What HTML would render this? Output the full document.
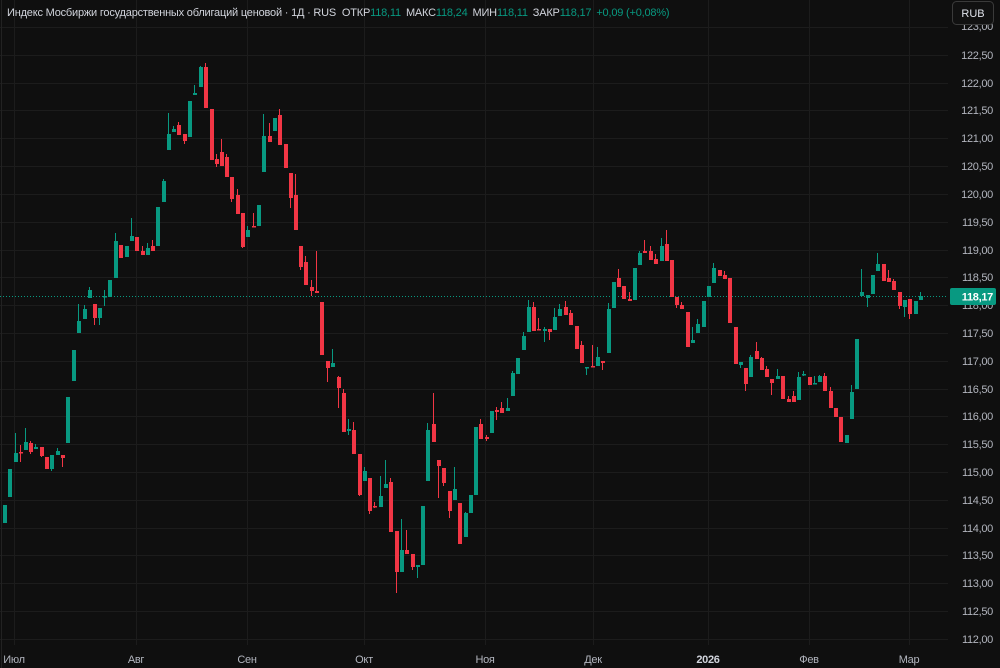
<!DOCTYPE html>
<html><head><meta charset="utf-8"><style>
html,body{margin:0;padding:0;background:#0f0f0f;width:1000px;height:668px;overflow:hidden}
svg{display:block}
text{font-family:"Liberation Sans",sans-serif}
</style></head><body>
<svg width="1000" height="668" viewBox="0 0 1000 668" xmlns="http://www.w3.org/2000/svg">
<rect width="1000" height="668" fill="#0f0f0f"/>
<g stroke="#1c1c1c" stroke-width="1">
<path d="M0 27.5H948M0 55.5H948M0 83.5H948M0 110.5H948M0 138.5H948M0 166.5H948M0 194.5H948M0 222.5H948M0 250.5H948M0 277.5H948M0 305.5H948M0 333.5H948M0 361.5H948M0 389.5H948M0 416.5H948M0 444.5H948M0 472.5H948M0 500.5H948M0 528.5H948M0 555.5H948M0 583.5H948M0 611.5H948M0 639.5H948"/>
<path d="M14.5 0V645M136.5 0V645M247.5 0V645M364.5 0V645M485.5 0V645M593.5 0V645M708.5 0V645M809.5 0V645M909.5 0V645"/>
</g>
<path d="M1.5 0V668" stroke="#222" />
<path d="M0 296.5H948" stroke="#089981" stroke-dasharray="1 2" stroke-width="1"/>
<path fill="none" stroke="#089981" stroke-width="1" d="M4.5 505V523M9.5 469V497M15.5 433V462M25.5 428V450M35.5 444V449M51.5 455V471M57.5 448V455M67.5 397V443M73.5 350V381M78.5 304V333M84.5 305V319M89.5 287V298M99.5 308V325M104.5 290V306M109.5 280V297M115.5 233V278M126.5 246V257M131.5 218V241M147.5 243V255M157.5 207V246M163.5 179V202M168.5 113V150M173.5 126V132M189.5 101V137M194.5 85V95M200.5 66V87M247.5 226V237M258.5 205V226M263.5 114V172M274.5 118V131M332.5 349V367M348.5 419V435M364.5 467V481M380.5 476V507M385.5 460V488M401.5 519V572M417.5 565V578M422.5 506V565M427.5 423V481M454.5 467V500M465.5 512V537M470.5 495V513M475.5 427V495M491.5 411V433M507.5 398V411M512.5 371V396M517.5 358V374M523.5 332V350M528.5 300V332M544.5 327V342M554.5 308V330M559.5 304V316M586.5 367V375M597.5 347V366M608.5 303V353M613.5 282V308M634.5 268V300M639.5 251V265M661.5 238V261M692.5 327V343M697.5 319V333M703.5 301V327M708.5 286V297M713.5 263V283M740.5 362V368M750.5 355V377M777.5 369V379M798.5 372V400M803.5 371V376M814.5 376V384M819.5 375V382M846.5 435V443M851.5 385V419M856.5 339V389M861.5 269V296M867.5 295V307M872.5 275V294M877.5 253V271M904.5 300V317M915.5 301V314M920.5 292V300"/>
<path fill="#089981" d="M3 505h4v18h-4zM8 469h4v28h-4zM14 453h4v9h-4zM24 442h4v8h-4zM34 447h4v2h-4zM50 455h4v14h-4zM56 451h4v4h-4zM66 397h4v46h-4zM72 350h4v31h-4zM77 321h4v12h-4zM83 309h4v10h-4zM88 290h4v8h-4zM98 308h4v10h-4zM103 296h4v1.5h-4zM108 280h4v17h-4zM114 241h4v37h-4zM125 246h4v11h-4zM130 236h4v5h-4zM146 248h4v7h-4zM156 207h4v39h-4zM162 181h4v21h-4zM167 134h4v16h-4zM172 129h4v3h-4zM188 101h4v36h-4zM193 93h4v2h-4zM199 67h4v20h-4zM246 230h4v7h-4zM257 205h4v21h-4zM262 136h4v36h-4zM273 118h4v13h-4zM331 363h4v4h-4zM347 429h4v2h-4zM363 471h4v10h-4zM379 496h4v11h-4zM384 484h4v4h-4zM400 550h4v22h-4zM416 565h4v2h-4zM421 506h4v59h-4zM426 430h4v51h-4zM453 489h4v11h-4zM464 513h4v24h-4zM469 495h4v18h-4zM474 427h4v68h-4zM490 411h4v22h-4zM506 408h4v3h-4zM511 373h4v23h-4zM516 358h4v16h-4zM522 336h4v14h-4zM527 307h4v25h-4zM543 329h4v2h-4zM553 317h4v13h-4zM558 309h4v7h-4zM585 367h4v1.5h-4zM596 357h4v9h-4zM607 309h4v44h-4zM612 282h4v26h-4zM633 268h4v32h-4zM638 253h4v12h-4zM660 246h4v15h-4zM691 340h4v3h-4zM696 324h4v9h-4zM702 301h4v26h-4zM707 286h4v11h-4zM712 268h4v15h-4zM739 362h4v3h-4zM749 357h4v20h-4zM776 376h4v3h-4zM797 377h4v23h-4zM802 374h4v1.5h-4zM813 383h4v1.5h-4zM818 376h4v6h-4zM845 435h4v8h-4zM850 392h4v27h-4zM855 339h4v50h-4zM860 292h4v4h-4zM866 295h4v3h-4zM871 275h4v19h-4zM876 264h4v7h-4zM903 300h4v7h-4zM914 301h4v13h-4zM919 296h4v4h-4z"/>
<path fill="none" stroke="#f23645" stroke-width="1" d="M20.5 445V462M30.5 441V454M41.5 447V457M46.5 457V469M62.5 455V467M94.5 304V325M120.5 245V258M136.5 237V251M142.5 246V255M152.5 240V251M178.5 122V135M184.5 134V144M205.5 63V108M211.5 109V160M216.5 154V167M221.5 139V166M226.5 154V177M231.5 177V202M237.5 189V214M242.5 213V248M253.5 213V227M269.5 123V142M279.5 109V145M285.5 144V168M290.5 173V208M295.5 174V230M300.5 246V270M305.5 256V285M311.5 280V296M316.5 251V293M321.5 302V355M327.5 361V382M338.5 376V408M343.5 389V432M353.5 422V454M359.5 454V496M369.5 478V514M374.5 502V508M390.5 478V532M396.5 531V593M406.5 530V554M412.5 554V570M433.5 393V442M438.5 460V498M443.5 468V486M449.5 491V518M459.5 503V544M480.5 419V439M486.5 435V441M496.5 407V420M501.5 402V413M533.5 302V331M538.5 318V330M549.5 329V340M565.5 301V315M570.5 310V325M576.5 326V349M581.5 341V363M592.5 345V367M602.5 361V370M618.5 269V287M623.5 286V299M629.5 292V301M644.5 240V253M650.5 246V260M655.5 254V264M666.5 230V261M671.5 260V297M676.5 297V308M681.5 302V309M687.5 312V347M719.5 270V276M724.5 271V279M729.5 278V323M735.5 327V364M745.5 368V391M756.5 342V359M761.5 357V370M766.5 366V377M771.5 379V395M782.5 376V399M788.5 396V402M793.5 391V402M809.5 377V385M824.5 373V391M830.5 387V408M835.5 408V417M840.5 417V442M883.5 264V281M888.5 270V282M893.5 279V290M899.5 292V309M909.5 299V319"/>
<path fill="#f23645" d="M19 452h4v1.5h-4zM29 443h4v9h-4zM40 447h4v9h-4zM45 457h4v12h-4zM61 455h4v3h-4zM93 304h4v14h-4zM119 245h4v13h-4zM135 237h4v14h-4zM141 251h4v4h-4zM151 246h4v5h-4zM177 125h4v10h-4zM183 134h4v7h-4zM204 67h4v41h-4zM210 109h4v51h-4zM215 159h4v5h-4zM220 152h4v14h-4zM225 157h4v20h-4zM230 177h4v22h-4zM236 195h4v19h-4zM241 213h4v34h-4zM252 226h4v1.5h-4zM268 136h4v6h-4zM278 115h4v30h-4zM284 144h4v24h-4zM289 173h4v25h-4zM294 195h4v35h-4zM299 246h4v21h-4zM304 262h4v23h-4zM310 287h4v4h-4zM315 291h4v2h-4zM320 302h4v53h-4zM326 361h4v7h-4zM337 377h4v11h-4zM342 393h4v39h-4zM352 430h4v24h-4zM358 454h4v41h-4zM368 478h4v33h-4zM373 506h4v1.5h-4zM389 482h4v50h-4zM395 531h4v41h-4zM405 550h4v4h-4zM411 554h4v13h-4zM432 424h4v18h-4zM437 460h4v6h-4zM442 468h4v15h-4zM448 491h4v20h-4zM458 503h4v41h-4zM479 424h4v15h-4zM485 437h4v2h-4zM495 410h4v2h-4zM500 408h4v5h-4zM532 307h4v24h-4zM537 329h4v1.5h-4zM548 329h4v3h-4zM564 307h4v8h-4zM569 313h4v12h-4zM575 326h4v23h-4zM580 345h4v18h-4zM591 366h4v1.5h-4zM601 361h4v2h-4zM617 278h4v9h-4zM622 286h4v13h-4zM628 299h4v2h-4zM643 251h4v2h-4zM649 251h4v9h-4zM654 259h4v5h-4zM665 244h4v17h-4zM670 260h4v37h-4zM675 297h4v8h-4zM680 305h4v4h-4zM686 312h4v35h-4zM718 270h4v6h-4zM723 275h4v4h-4zM728 278h4v45h-4zM734 327h4v37h-4zM744 368h4v16h-4zM755 351h4v8h-4zM760 358h4v12h-4zM765 369h4v8h-4zM770 379h4v4h-4zM781 376h4v23h-4zM787 399h4v3h-4zM792 396h4v6h-4zM808 377h4v8h-4zM823 376h4v15h-4zM829 391h4v17h-4zM834 408h4v9h-4zM839 417h4v25h-4zM882 264h4v17h-4zM887 278h4v4h-4zM892 281h4v9h-4zM898 292h4v14h-4zM908 299h4v15h-4z"/>
<g fill="#b2b5be" font-size="11" text-anchor="end" letter-spacing="-0.3">
<text x="993" y="30">123,00</text>
<text x="993" y="59">122,50</text><text x="993" y="87">122,00</text><text x="993" y="114">121,50</text><text x="993" y="142">121,00</text><text x="993" y="170">120,50</text><text x="993" y="198">120,00</text><text x="993" y="226">119,50</text><text x="993" y="254">119,00</text><text x="993" y="281">118,50</text><text x="993" y="309">118,00</text><text x="993" y="337">117,50</text><text x="993" y="365">117,00</text><text x="993" y="393">116,50</text><text x="993" y="420">116,00</text><text x="993" y="448">115,50</text><text x="993" y="476">115,00</text><text x="993" y="504">114,50</text><text x="993" y="532">114,00</text><text x="993" y="559">113,50</text><text x="993" y="587">113,00</text><text x="993" y="615">112,50</text><text x="993" y="643">112,00</text>
</g>
<rect x="950" y="288" width="46" height="17" rx="2" fill="#089981"/>
<text x="993" y="300.5" fill="#fff" font-size="11" text-anchor="end" font-weight="bold" letter-spacing="-0.3">118,17</text>
<rect x="952.5" y="1.5" width="41" height="23" rx="4" fill="#111" stroke="#3a3a3a"/>
<text x="973" y="17" fill="#e0e3eb" font-size="11" text-anchor="middle">RUB</text>
<g fill="#b2b5be" font-size="11" text-anchor="middle" letter-spacing="-0.3">
<text x="14" y="663">Июл</text><text x="136" y="663">Авг</text><text x="247" y="663">Сен</text><text x="364" y="663">Окт</text><text x="485" y="663">Ноя</text><text x="593" y="663">Дек</text><text x="708" y="663" font-weight="bold" fill="#d1d4dc">2026</text><text x="809" y="663">Фев</text><text x="909" y="663">Мар</text>
</g>
<text x="7" y="16" font-size="11" fill="#d1d4dc" letter-spacing="-0.2">Индекс Мосбиржи государственных облигаций ценовой · 1Д · RUS <tspan dx="3">ОТКР</tspan><tspan fill="#089981">118,11</tspan><tspan dx="5">МАКС</tspan><tspan fill="#089981">118,24</tspan><tspan dx="5">МИН</tspan><tspan fill="#089981">118,11</tspan><tspan dx="5">ЗАКР</tspan><tspan fill="#089981">118,17</tspan><tspan dx="5" fill="#089981">+0,09 (+0,08%)</tspan></text>
</svg>
</body></html>
